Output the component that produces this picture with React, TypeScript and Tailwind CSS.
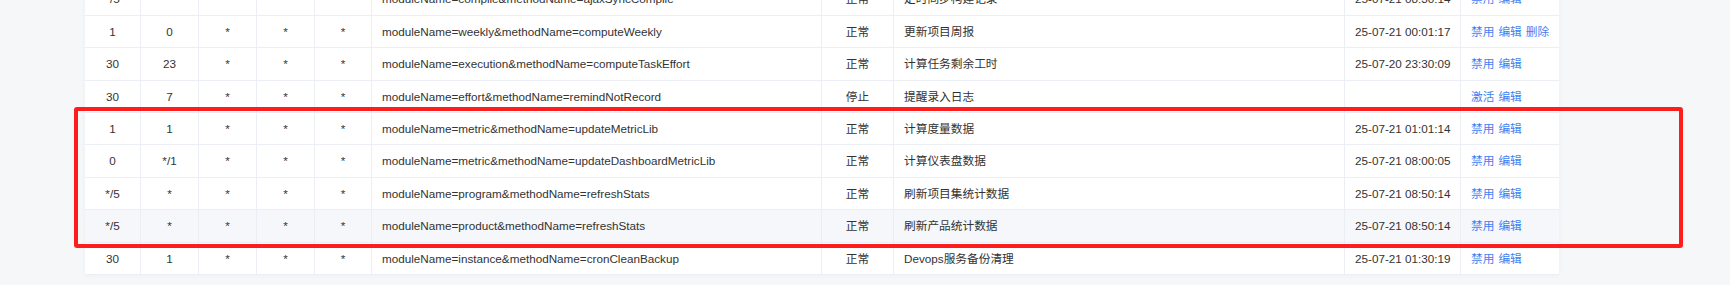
import React from 'react';

const cols = 'grid grid-cols-[56px_58px_58px_58px_57px_450px_72px_451px_116px_98px]';

const jobs = [
  { m: '*/5', h: '*', dom: '*', mon: '*', dow: '*', cmd: 'moduleName=compile&methodName=ajaxSyncCompile', status: '正常', desc: '定时同步构建记录', time: '25-07-21 08:30:14', actions: ['禁用', '编辑'] },
  { m: '1', h: '0', dom: '*', mon: '*', dow: '*', cmd: 'moduleName=weekly&methodName=computeWeekly', status: '正常', desc: '更新项目周报', time: '25-07-21 00:01:17', actions: ['禁用', '编辑', '删除'] },
  { m: '30', h: '23', dom: '*', mon: '*', dow: '*', cmd: 'moduleName=execution&methodName=computeTaskEffort', status: '正常', desc: '计算任务剩余工时', time: '25-07-20 23:30:09', actions: ['禁用', '编辑'] },
  { m: '30', h: '7', dom: '*', mon: '*', dow: '*', cmd: 'moduleName=effort&methodName=remindNotRecord', status: '停止', desc: '提醒录入日志', time: '', actions: ['激活', '编辑'] },
  { m: '1', h: '1', dom: '*', mon: '*', dow: '*', cmd: 'moduleName=metric&methodName=updateMetricLib', status: '正常', desc: '计算度量数据', time: '25-07-21 01:01:14', actions: ['禁用', '编辑'] },
  { m: '0', h: '*/1', dom: '*', mon: '*', dow: '*', cmd: 'moduleName=metric&methodName=updateDashboardMetricLib', status: '正常', desc: '计算仪表盘数据', time: '25-07-21 08:00:05', actions: ['禁用', '编辑'] },
  { m: '*/5', h: '*', dom: '*', mon: '*', dow: '*', cmd: 'moduleName=program&methodName=refreshStats', status: '正常', desc: '刷新项目集统计数据', time: '25-07-21 08:50:14', actions: ['禁用', '编辑'] },
  { m: '*/5', h: '*', dom: '*', mon: '*', dow: '*', cmd: 'moduleName=product&methodName=refreshStats', status: '正常', desc: '刷新产品统计数据', time: '25-07-21 08:50:14', actions: ['禁用', '编辑'], hover: true },
  { m: '30', h: '1', dom: '*', mon: '*', dow: '*', cmd: 'moduleName=instance&methodName=cronCleanBackup', status: '正常', desc: 'Devops服务备份清理', time: '25-07-21 01:30:19', actions: ['禁用', '编辑'] },
];

export default function App() {
  return (
    <div
      className="relative w-[1730px] h-[285px] overflow-hidden bg-[#f6f7f9] text-[11.7px] text-[#333]"
      style={{ fontFamily: '"Liberation Sans", "Noto Sans CJK SC", sans-serif' }}
    >
      <div className="pl-[85px]">
        <div className="w-[1474px] mt-[-16.5px] bg-white shadow-[0_0_6px_rgba(0,0,0,0.04)]">
          {jobs.map((job, idx) => (
            <div
              key={idx}
              className={`${cols} h-[32.4px] border-b border-[#ebeef5] ${job.hover ? 'bg-[#f5f7fa]' : 'bg-white'}`}
            >
              <div className="flex items-center justify-center border-r border-[#ebeef5]">{job.m}</div>
              <div className="flex items-center justify-center border-r border-[#ebeef5]">{job.h}</div>
              <div className="flex items-center justify-center border-r border-[#ebeef5]">{job.dom}</div>
              <div className="flex items-center justify-center border-r border-[#ebeef5]">{job.mon}</div>
              <div className="flex items-center justify-center border-r border-[#ebeef5]">{job.dow}</div>
              <div className="flex items-center px-[10px] border-r border-[#ebeef5] whitespace-nowrap">{job.cmd}</div>
              <div className="flex items-center justify-center border-r border-[#ebeef5]">{job.status}</div>
              <div className="flex items-center px-[10px] border-r border-[#ebeef5] whitespace-nowrap">{job.desc}</div>
              <div className="flex items-center px-[10px] border-r border-[#ebeef5] whitespace-nowrap">{job.time}</div>
              <div className="flex items-center gap-[4px] px-[10px] whitespace-nowrap text-[#3f7ff3]">
                {job.actions.map((a) => (
                  <a key={a} className="cursor-pointer">{a}</a>
                ))}
              </div>
            </div>
          ))}
        </div>
      </div>

      {/* annotation box */}
      <div className="absolute left-[74px] top-[107px] w-[1609px] h-[141px] border-[4px] border-[#fe1d1d] rounded-[3px] pointer-events-none" />
    </div>
  );
}
